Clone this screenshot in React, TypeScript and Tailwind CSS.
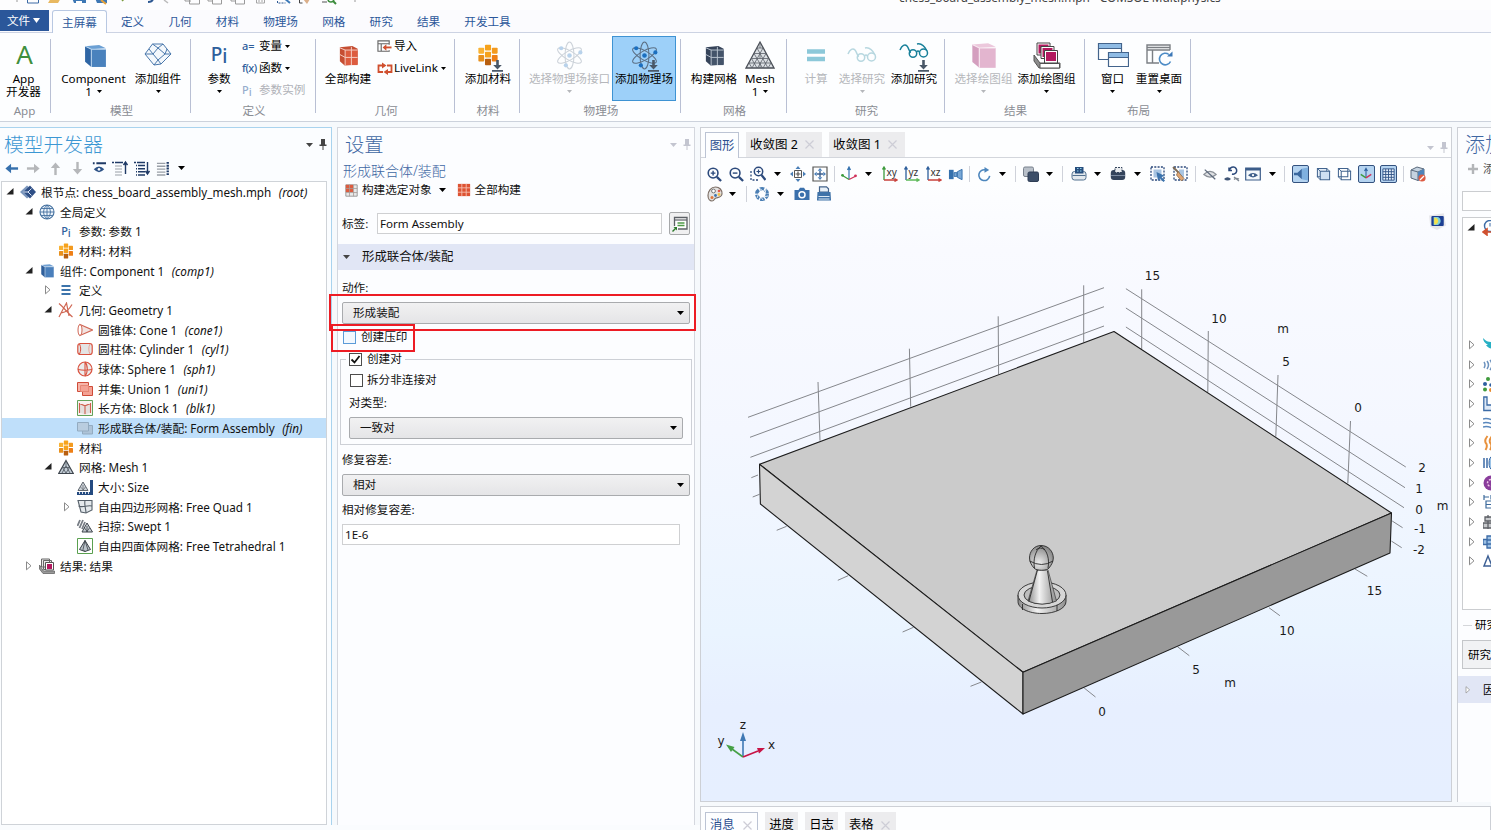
import React from "react";

type P = { children?: React.ReactNode; s?: number; c?: string; v?: string };

const S = ({ children, s = 16, c = "", v = "0 0 16 16" }: P) => (
  <svg width={s} height={s} viewBox={v} fill="none" className={`shrink-0 ${c}`}>
    {children}
  </svg>
);

const Caret = ({ c = "text-black" }: { c?: string }) => (
  <svg width="7" height="4" viewBox="0 0 7 4" className={`shrink-0 ${c}`}>
    <path d="M0 0h7L3.5 4z" fill="currentColor" />
  </svg>
);

const SmallCaret = ({ c = "text-black" }: { c?: string }) => (
  <svg width="5" height="3" viewBox="0 0 5 3" className={`shrink-0 ${c}`}>
    <path d="M0 0h5L2.5 3z" fill="currentColor" />
  </svg>
);

const Cell = ({ w, children }: { w: string; children?: React.ReactNode }) => (
  <div className={`flex h-full shrink-0 items-center justify-center ${w}`}>{children}</div>
);

const Sep = () => <div className="h-[16px] w-px bg-[#cfd2da]" />;

/* ---------- Icons ---------- */

const Cube = ({ s = 24, a, b, t, line }: { s?: number; a: string; b: string; t: string; line: string }) => (
  <S s={s} v="0 0 24 24">
    <path d="M2 3L15.500 2 22 5 8 6z" fill={t} />
    <path d="M2 3L8 6V23L2 18z" fill={b} />
    <path d="M8 6H22V23H8z" fill={a} />
    <path d="M2 3L8 6H22M8 6V23" stroke={line} strokeWidth="1" />
  </S>
);

const GridCube = ({ s = 24, a, b, line }: { s?: number; a: string; b: string; line: string }) => (
  <S s={s} v="0 0 24 24">
    <path d="M3 3.500L16 2 21.500 5 21.500 21.500 8 22.500 3 18z" fill={b} />
    <path d="M8.500 6H21.500V22H8.500z" fill={a} />
    <path d="M3 4L8.500 6.300H21.500M8.500 6V22.500M15 3V22M3 11L8.500 14H21.500" stroke={line} strokeWidth="1" />
  </S>
);

const Materials = ({ s = 16 }: { s?: number }) => (
  <S s={s}>
    <rect x="5.800" y="0.500" width="4.400" height="4.300" rx=".6" fill="#f6a21c" />
    <rect x="1" y="2.700" width="4.200" height="4.300" rx=".6" fill="#f9b233" />
    <rect x="10.800" y="2.700" width="4.200" height="4.300" rx=".6" fill="#f39a1e" />
    <rect x="5.800" y="5.600" width="4.400" height="4.300" rx=".6" fill="#f6a21c" />
    <rect x="1" y="8" width="4.200" height="4.800" rx=".6" fill="#e8901c" />
    <rect x="10.800" y="8" width="4.200" height="4.800" rx=".6" fill="#ee7f16" />
    <rect x="5.800" y="10.700" width="4.400" height="4.800" rx=".6" fill="#b85f10" />
  </S>
);

const DownArrow = () => (
  <svg width="11" height="12" viewBox="0 0 11 12" fill="#4a5868">
    <path d="M4.200 0h2.600v5h3L5.500 9.500 1.200 5h3zM0 10h11v1.800H0z" />
  </svg>
);

const Atom = ({ dim = false }: { dim?: boolean }) => (
  <S s={29} v="0 0 28 28" c={dim ? "opacity-30" : ""}>
    <g stroke="#5c6f84" strokeWidth="1">
      <ellipse cx="14" cy="14" rx="4.300" ry="13" />
      <ellipse cx="14" cy="14" rx="4.300" ry="13" transform="rotate(60 14 14)" />
      <ellipse cx="14" cy="14" rx="4.300" ry="13" transform="rotate(-60 14 14)" />
    </g>
    <circle cx="14" cy="14" r="2.200" fill="#1b6fc0" />
    <circle cx="6" cy="7" r="2" fill="#1b6fc0" />
    <circle cx="24.500" cy="11" r="2" fill="#1b6fc0" />
    <circle cx="10.500" cy="23.500" r="2" fill="#1b6fc0" />
  </S>
);

const MeshTri = () => (
  <S s={30} v="0 0 30 30">
    <path d="M15 2L29 28H1z" fill="#dde1e5" stroke="#4a4f57" strokeWidth="1.300" />
    <path d="M12 8h6M9 13.500h12M6.500 18.500h17M4 23h22M12 8l11 20M18 8L7 28M9 13.500L17.500 28M21 13.500L12.500 28M6.500 18.500L12 28M23.500 18.500L18 28M4 23l3 5M26 23l-3 5M15 2v6M15 13.500v5M15 23v5" stroke="#5a6068" strokeWidth=".8" />
  </S>
);

const Glasses = ({ dim = false }: { dim?: boolean }) => (
  <svg width="30" height="18" viewBox="0 0 30 18" fill="none" stroke="#19809a" strokeWidth="1.500" className={dim ? "opacity-30" : ""}>
    <path d="M1 8C3 3 6 2 8 4s2 6 4 6.500" />
    <circle cx="14" cy="11.500" r="3.700" />
    <circle cx="24.500" cy="11" r="4" />
    <path d="M17.500 10q1.500-2 3 0M18 2c4-1 7 1 10 7" />
  </svg>
);

const PlotGroup = ({ s = 28 }: { s?: number }) => (
  <S s={s} v="0 0 28 28">
    <path d="M1 14l6 8h20v5H6L1 20z" fill="#8c8c8c" stroke="#555" />
    <path d="M7 22.500h19.500V27H7z" fill="#fff" stroke="#555" />
    <path d="M4 2h13v12H4z" fill="#fff" stroke="#444" />
    <path d="M5.500 3.500h10v9h-10z" fill="#b3195f" />
    <path d="M8 5.500h13v12H8z" fill="#fff" stroke="#444" />
    <path d="M9.500 7h10v9h-10z" fill="#b3195f" />
    <path d="M11.500 9.500h13v12.500h-13z" fill="#fff" stroke="#444" />
    <path d="M13 11h10v9H13z" fill="#b3195f" />
  </S>
);

const WindowsIcon = () => (
  <S s={32} v="0 0 32 32">
    <path d="M1.500 4.500h23v16h-23z" fill="#fff" stroke="#44648c" strokeWidth="1.200" />
    <path d="M2 5h22v4H2z" fill="#8fbbe4" />
    <path d="M11.500 13.500h20v14h-20z" fill="#fff" stroke="#44648c" strokeWidth="1.200" />
    <path d="M12 14h19v4H12z" fill="#8fbbe4" />
    <path d="M2 9.500h22M12 18.500h19" stroke="#44648c" />
  </S>
);

const ResetDesk = () => (
  <S s={28} v="0 0 28 28">
    <path d="M14 22H2V4h23v5M2 9h23M7.500 9v13M2 6.500h23" stroke="#7b7f84" strokeWidth="1.400" />
    <path d="M25.500 20.500a5.800 5.800 0 1 1-1.600-7" stroke="#4d8cc6" strokeWidth="1.600" />
    <path d="M27.500 10.500v5h-5.500z" fill="#3c78b8" />
  </S>
);

const Globe = () => (
  <S>
    <circle cx="8" cy="8" r="7" stroke="#44709f" strokeWidth="1.100" fill="#eef5fc" />
    <path d="M8 1v14M1 8h14M2.200 4.500h11.600M2.200 11.500h11.600M8 1C3.500 4.500 3.500 11.500 8 15M8 1c4.500 3.500 4.500 10.500 0 14" stroke="#44709f" strokeWidth=".9" />
  </S>
);

const Pi = ({ s = 12 }: { s?: number }) => (
  <span className="flex items-start leading-none font-medium text-[#2f5f9c]" style={{ fontSize: s }}>
    P<span className="mt-[2px]">i</span>
  </span>
);

const TreeIcons: Record<string, React.ReactNode> = {
  root: (
    <S>
      <path d="M0 8L7 1.500l3 2.500v8L7 14.500z" fill="#7c97bd" />
      <path d="M3.500 8L10 1.500 16 8 10 14.500z" fill="#2f4f86" />
      <path d="M3.500 8h4.500l3.500-3.500M8 8l3.500 3.500" stroke="#dce6f4" strokeWidth="1" />
    </S>
  ),
  globe: <Globe />,
  pi: <Pi s={11} />,
  mat: <Materials />,
  comp: <Cube s={15} a="#4a7fbb" b="#2f5f9b" t="#6f9fd2" line="#cfe0f2" />,
  defs: (
    <S>
      <path d="M3.500 4h9M3.500 8h9M3.500 12h9" stroke="#3c74ab" strokeWidth="2" />
    </S>
  ),
  geom: (
    <S>
      <path d="M1 1.500c5 4 8 9 13.500 13.500M1 15C3 11 5 7 8.500 1l2.500 13M3 10.500c3 .5 7-1 11-8" stroke="#cf6652" strokeWidth="1.200" />
    </S>
  ),
  cone: (
    <S>
      <path d="M3 2.500L15.500 8 3 13.500z" fill="#f3e3e0" stroke="#d06553" strokeWidth="1.100" />
      <ellipse cx="3" cy="8" rx="2" ry="5.500" fill="#fff" stroke="#d06553" />
    </S>
  ),
  cyl: (
    <S>
      <rect x=".8" y="2.500" width="14.400" height="11" rx="2.500" fill="#e4e4e4" stroke="#d9523f" strokeWidth="1.200" />
      <path d="M2.500 3c1.600 3 1.600 7 0 10" stroke="#d9523f" />
      <path d="M13 3c-1.600 3-1.600 7 0 10" stroke="#e8a79c" />
    </S>
  ),
  sph: (
    <S>
      <circle cx="8" cy="8" r="7" fill="#ececec" stroke="#d9523f" strokeWidth="1.200" />
      <path d="M8 1v14M1 8.500q7 1.500 14 0M8 1c3 3 3 11 0 14" stroke="#d9523f" strokeWidth="1.100" />
    </S>
  ),
  uni: (
    <S>
      <path d="M5.500 5.500h10v9h-10z" fill="#f4a294" stroke="#cf4b38" />
      <path d="M.5 1.500h11v9H.5z" fill="#f7b5a9" stroke="#cf4b38" />
      <path d="M3.500 4.500h8v6h-8z" fill="#f4a294" stroke="#e58877" />
    </S>
  ),
  blk: (
    <S>
      <path d="M.5.5h15v15H.5z" fill="#f7f1ef" stroke="#62a35a" />
      <path d="M2.500 3.500l5.500 2.300 5.500-2.300v9l-5.500 2-5.500-2z" fill="#e4e0de" />
      <path d="M2.500 3.500l5.500 2.300 5.500-2.300M8 5.800V14M2.500 3v10M13.500 3v10" stroke="#cd5d4b" strokeWidth="1.100" />
    </S>
  ),
  fin: (
    <S>
      <path d="M5.500 5.500h10v8.500h-10z" fill="#aec4d8" stroke="#93abc0" />
      <path d="M.5 2.500h11V11H.5z" fill="#b9cddf" stroke="#93abc0" />
    </S>
  ),
  mesh: (
    <S>
      <path d="M8 1.500L15.300 14.500H.7z" fill="#c3cdd6" stroke="#3f464e" strokeWidth="1.200" />
      <path d="M8 2v5M4.500 8.500h7M8 7l-4 7M8 7l4 7M4.500 8.500L8 14l3.500-5.500" stroke="#4b535c" strokeWidth=".8" />
    </S>
  ),
  size: (
    <S>
      <path d="M6 3l5 8.500H1z" fill="#ccd2d7" stroke="#5f666e" />
      <path d="M6 6v5M3.500 8l3 3M8.500 8L6 11" stroke="#5f666e" strokeWidth=".7" />
      <path d="M13 1h3v15h-3zM0 13h16v3H0z" fill="#244a80" />
      <path d="M2.500 13v2M5.500 13v2M8.500 13v2M11.500 13v2" stroke="#fff" strokeWidth=".8" />
    </S>
  ),
  quad: (
    <S>
      <path d="M1 1.500h14v9.500L9 14 4 13z" fill="#e3e8ec" stroke="#56606a" strokeWidth="1.100" />
      <path d="M8 1.500c-1 5 1 8 1 12.500M1.500 7c4 2 8-1 13.500 0" stroke="#56606a" strokeWidth="1.100" />
    </S>
  ),
  swept: (
    <S>
      <path d="M3 2L.5 8M6 2L2.500 10M8 4l-3 7" stroke="#777d85" strokeWidth="1.800" />
      <path d="M10 5l5.500 9H5z" fill="#c7cdd3" stroke="#3f454d" />
      <path d="M10 8v6M7.500 10l3 4M12.500 10l-3 4" stroke="#3f454d" strokeWidth=".8" />
    </S>
  ),
  tet: (
    <S>
      <path d="M.5.5h15v15H.5z" fill="#fff" stroke="#5aa04f" />
      <path d="M8 2.500l5.500 9L8 13.500l-5.500-2z" fill="#bcc4cb" stroke="#3b4149" />
      <path d="M8 2.500l-2 9 2 2M8 2.500l3 9.500" stroke="#3b4149" strokeWidth=".8" />
    </S>
  ),
  res: (
    <S>
      <path d="M.5 7l4 6h11v2.500H4L.5 11z" fill="#9a9a9a" stroke="#666" strokeWidth=".8" />
      <path d="M2.500 1h8v8h-8zM4.500 2.500h8v9h-8z" fill="#e9e9e9" stroke="#666" />
      <path d="M6.500 4.500h8V12h-8z" fill="#fff" stroke="#555" />
      <path d="M8 6h5v5H8z" fill="#b3195f" />
    </S>
  ),
};

/* ---------- Ribbon ---------- */

const QuickAccess = () => (
  <div className="flex h-[10px] shrink-0 items-start overflow-hidden bg-[#fdfdfe]">
    <svg width="360" height="6" viewBox="0 0 360 6" fill="none" className="shrink-0">
      <path d="M17 0v2" stroke="#999" />
      <path d="M27.500-4v7h11v-7" stroke="#3c6ba6" />
      <path d="M48 3l3-5h10l-3 5z" fill="#e8b860" />
      <path d="M72 -2h14v5h-12z" fill="#3d77b4" /><path d="M76 1h6v2h-6z" fill="#fff" />
      <path d="M95 -2h12v5H97z" fill="#3d77b4" /><path d="M101 0l5 4" stroke="#e4a23c" strokeWidth="2" />
      <path d="M122 1l2-2" stroke="#7a9a3c" strokeWidth="1.500" />
      <path d="M148 2q5 0 5-4" stroke="#2d5892" strokeWidth="2" />
      <path d="M164 0l4 3" stroke="#bbb" strokeWidth="1.500" />
      <path d="M185-3v4h6M189.500-1h10v5h-10zM208-3v4h5M212.500-1h9v5h-9zM231-3v4h5M235.500-1h9v5h-9z" stroke="#9a9a9a" />
      <path d="M256.500-2v5h8v-5M259 0v2M262 0v2" stroke="#a5a5a5" />
      <path d="M277.500-2v5h8" stroke="#2d5892" strokeDasharray="2 1" /><path d="M284-2l6 5" stroke="#3c7ab8" strokeWidth="2" />
      <path d="M299.500-2v5h3" stroke="#444" /><path d="M303 -1h7l-3 5z" fill="#dcb08a" />
      <path d="M322 2h5" stroke="#555" /><circle cx="331" cy="-1" r="3" stroke="#3c8c3c" strokeWidth="1.500" /><path d="M333 1l3 3" stroke="#3c8c3c" strokeWidth="2" />
      <path d="M355 0v2" stroke="#999" />
    </svg>
    <div className="mt-[-11px] ml-[539px] text-[11.800px] leading-[16px] whitespace-pre text-[#444]">
      chess_board_assembly_mesh.mph - COMSOL Multiphysics
    </div>
  </div>
);

const Tabs = () => (
  <div className="flex h-[23px] shrink-0 border-b border-[#ccd3e3] bg-[#fbfbfe] text-[#2b579a]">
    <div className="flex h-[21px] w-[49px] items-center justify-center gap-[3px] bg-[#2b579a] pr-[2px] text-white">
      文件
      <svg width="7" height="5" viewBox="0 0 7 5"><path d="M0 0h7L3.500 5z" fill="#fff" /></svg>
    </div>
    <div className="ml-[3px] flex h-[23px] w-[55px] items-center justify-center rounded-t-[3px] border border-b-0 border-[#b8c8e2] bg-[#fdfeff] pt-[2px]">
      主屏幕
    </div>
    <div className="ml-[14px] flex items-center gap-[24.200px] pt-[2px]">
      {["定义", "几何", "材料", "物理场", "网格", "研究", "结果", "开发工具"].map((t) => (
        <span key={t}>{t}</span>
      ))}
    </div>
  </div>
);

const Group = ({ w, label, children }: { w: string; label: string; children: React.ReactNode }) => (
  <div className={`flex h-[74px] shrink-0 flex-col border-r border-[#b9c0d4] ${w}`}>
    <div className="flex h-[64px] shrink-0 items-start whitespace-nowrap">{children}</div>
    <div className="h-[14px] shrink-0 pl-[2px] text-center leading-[15px] text-[#8a8d94]">{label}</div>
  </div>
);

type BigProps = {
  w: string;
  icon: React.ReactNode;
  label: string;
  second?: string;
  caret?: boolean;
  dim?: boolean;
  on?: boolean;
  add?: boolean;
};
const Big = ({ w, icon, label, second, caret, dim, on, add }: BigProps) => (
  <div
    className={`mt-[-3px] flex h-[65px] shrink-0 flex-col items-center ${w} ${
      on ? "border border-[#3e93d3] bg-[#9dd0f9]" : "border border-transparent"
    } ${dim ? "text-[#b5b7bb]" : "text-black"}`}
  >
    <div className="relative flex h-[36px] w-full shrink-0 items-center justify-center">
      {icon}
      {add && (
        <div className="absolute top-[23px] left-1/2 ml-[4px]">
          <DownArrow />
        </div>
      )}
    </div>
    <div className="flex h-[12px] items-center justify-center leading-[12px]">{label}</div>
    <div className="flex h-[13px] items-center justify-center gap-[5px] leading-[13px]">
      {second}
      {caret && <SmallCaret c={dim ? "text-[#b5b7bb]" : "text-black"} />}
    </div>
  </div>
);

const Small = ({ icon, label, caret, dim, iw }: { icon: React.ReactNode; label: string; caret?: boolean; dim?: boolean; iw: string }) => (
  <div className={`flex h-[22px] items-center ${dim ? "text-[#b0b2b8]" : "text-black"}`}>
    <div className={`flex items-center ${iw}`}>{icon}</div>
    <span>{label}</span>
    {caret && (
      <span className="ml-[3px]">
        <SmallCaret />
      </span>
    )}
  </div>
);

const Ribbon = () => (
  <div className="flex h-[89px] shrink-0 border-b border-[#ccd2dc] bg-[#fdfeff] pt-[6px]">
    <Group w="w-[51px] pr-[3px]" label="App">
      <Big
        w="w-[47px]"
        icon={<span className="mt-[-2px] ml-[2px] text-[26px] leading-none text-[#3f8f3c]">A</span>}
        label="App"
        second="开发器"
      />
    </Group>
    <Group w="w-[140px]" label="模型">
      <Big w="ml-[7px] w-[71px]" icon={<div className="ml-[3px]"><Cube s={25} a="#4a82bd" b="#2f66a5" t="#6ba0d4" line="#b8d4ee" /></div>} label="Component" second="1" caret />
      <Big
        w="ml-[2px] w-[54px]"
        icon={
          <S s={28} v="0 0 28 28">
            <path d="M8.500 3L19 3 27 13 17 23 10 24 1 13z" fill="#f4f8fc" stroke="#4a78ac" strokeWidth="1" />
            <path d="M8.500 3L14 7l5-4M1 13L9 13 14 7l7 6h6M9 13l5 6 7-6M14 19L10 24M14 19l3 4M5 8l4 5M23 8l-2 5" stroke="#4a78ac" strokeWidth="1" />
          </S>
        }
        label="添加组件"
        caret
      />
    </Group>
    <Group w="w-[125px]" label="定义">
      <Big w="ml-[13px] w-[30px]" icon={<Pi s={19} />} label="参数" caret />
      <div className="mt-[-4px] ml-[8px] flex flex-col">
        <Small iw="w-[17px] text-[11px] font-medium text-[#2f5f9c]" icon="a=" label="变量" caret />
        <Small iw="w-[17px] text-[11px] tracking-[-0.5px] font-medium text-[#2f5f9c]" icon="f(x)" label="函数" caret />
        <Small iw="w-[17px] opacity-50" icon={<Pi s={11} />} label="参数实例" dim />
      </div>
    </Group>
    <Group w="w-[139px]" label="几何">
      <Big w="ml-[8px] w-[48px]" icon={<GridCube s={23} a="#dd5c3f" b="#c54e33" line="#f6cfc4" />} label="全部构建" />
      <div className="mt-[-4px] ml-[5px] flex flex-col">
        <Small
          iw="w-[17px]"
          icon={
            <S s={15}>
              <path d="M13 6V2H1v11h12v-1M1 5h12M4.500 5v8" stroke="#666" strokeWidth="1.200" />
              <path d="M15.500 9H8" stroke="#d0502f" strokeWidth="2" />
              <path d="M6 9l4-3.500v7z" fill="#d0502f" />
            </S>
          }
          label="导入"
        />
        <Small
          iw="w-[17px]"
          icon={
            <S s={16}>
              <path d="M6 12H1.500V5.500H6M10 12h4.500V5.500H10" stroke="#d0502f" strokeWidth="1.800" />
              <path d="M5 2.500l4.500 3-4.500 3zM11 9l-4.500 3 4.500 3z" fill="#d0502f" />
            </S>
          }
          label="LiveLink"
          caret
        />
      </div>
    </Group>
    <Group w="w-[65px]" label="材料">
      <Big w="ml-[9px] w-[48px]" icon={<Materials s={22} />} label="添加材料" add />
    </Group>
    <Group w="w-[161px]" label="物理场">
      <Big w="ml-[8px] w-[83px]" icon={<Atom dim />} label="选择物理场接口" caret dim />
      <Big w="ml-[1px] w-[64px]" icon={<Atom />} label="添加物理场" on add />
    </Group>
    <Group w="w-[106px]" label="网格">
      <Big w="ml-[9px] w-[48px]" icon={<GridCube s={23} a="#44546a" b="#36445a" line="#b9c3cf" />} label="构建网格" />
      <Big w="ml-[4px] w-[36px]" icon={<MeshTri />} label="Mesh" second="1" caret />
    </Group>
    <Group w="w-[158px]" label="研究">
      <Big
        w="ml-[16px] w-[26px]"
        icon={
          <S s={18} v="0 0 18 18">
            <path d="M0 5.500h18M0 13h18" stroke="#8cc8d9" strokeWidth="4.500" />
          </S>
        }
        label="计算"
        dim
      />
      <Big w="ml-[9px] w-[48px]" icon={<Glasses dim />} label="选择研究" caret dim />
      <Big w="ml-[4px] w-[48px]" icon={<div className="mb-[8px]"><Glasses /></div>} label="添加研究" add />
    </Group>
    <Group w="w-[140px]" label="结果">
      <Big w="ml-[9px] w-[59px]" icon={<Cube s={28} a="#e3b5cf" b="#d49fbf" t="#ecc8dc" line="#f7e6ef" />} label="选择绘图组" caret dim />
      <Big w="ml-[4px] w-[59px]" icon={<PlotGroup />} label="添加绘图组" caret />
    </Group>
    <Group w="w-[106px]" label="布局">
      <Big w="ml-[12px] w-[31px]" icon={<WindowsIcon />} label="窗口" caret />
      <Big w="ml-[7px] w-[48px]" icon={<ResetDesk />} label="重置桌面" caret />
    </Group>
  </div>
);

/* ---------- Model builder ---------- */

const Pin = ({ c }: { c: string }) => (
  <svg width="8" height="11" viewBox="0 0 8 11" className={`shrink-0 ${c}`} fill="currentColor">
    <path d="M2 0h4v5.500h1.500V7H4.500v4h-1V7H.5V5.500H2z" />
  </svg>
);

type Node = [indent: string, open: "o" | "c" | "", icon: string, text: string, tag?: string];
const nodes: Node[] = [
  ["pl-[4px]", "o", "root", "根节点: chess_board_assembly_mesh.mph", "root"],
  ["pl-[23px]", "o", "globe", "全局定义"],
  ["pl-[42px]", "", "pi", "参数: 参数 1"],
  ["pl-[42px]", "", "mat", "材料: 材料"],
  ["pl-[23px]", "o", "comp", "组件: Component 1", "comp1"],
  ["pl-[42px]", "c", "defs", "定义"],
  ["pl-[42px]", "o", "geom", "几何: Geometry 1"],
  ["pl-[61px]", "", "cone", "圆锥体: Cone 1", "cone1"],
  ["pl-[61px]", "", "cyl", "圆柱体: Cylinder 1", "cyl1"],
  ["pl-[61px]", "", "sph", "球体: Sphere 1", "sph1"],
  ["pl-[61px]", "", "uni", "并集: Union 1", "uni1"],
  ["pl-[61px]", "", "blk", "长方体: Block 1", "blk1"],
  ["pl-[61px]", "", "fin", "形成联合体/装配: Form Assembly", "fin"],
  ["pl-[42px]", "", "mat", "材料"],
  ["pl-[42px]", "o", "mesh", "网格: Mesh 1"],
  ["pl-[61px]", "", "size", "大小: Size"],
  ["pl-[61px]", "c", "quad", "自由四边形网格: Free Quad 1"],
  ["pl-[61px]", "", "swept", "扫掠: Swept 1"],
  ["pl-[61px]", "", "tet", "自由四面体网格: Free Tetrahedral 1"],
  ["pl-[23px]", "c", "res", "结果: 结果"],
];

const Twist = ({ open }: { open: string }) => (
  <svg width="8" height="10" viewBox="0 0 8 10" className="shrink-0">
    {open === "o" && <path d="M7.500 1v6.500H.500z" fill="#222" />}
    {open === "c" && <path d="M1.500.8v8L6 4.800z" fill="#fff" stroke="#8a8a8a" />}
  </svg>
);

const ModelBuilder = () => (
  <div className="flex w-[332px] shrink-0 flex-col border-t border-r border-[#a9d3ee] bg-[#fbfdff]">
    <div className="flex h-[33px] shrink-0 items-center pr-[4px] pl-[4px]">
      <span className="flex-1 text-[19.800px] leading-none font-light text-[#3c97d3]">模型开发器</span>
      <Caret c="text-[#444]" />
      <span className="ml-[6px]"><Pin c="text-[#444]" /></span>
    </div>
    <div className="flex h-[14px] shrink-0 items-center">
      <Cell w="w-[22px]"><S s={15}><path d="M15 8H4" stroke="#3670ad" strokeWidth="2.600" /><path d="M7.500 3L1.500 8l6 5z" fill="#3670ad" /></S></Cell>
      <Cell w="w-[22px]"><S s={15}><path d="M1 8h11" stroke="#b5b7ba" strokeWidth="2.600" /><path d="M8.500 3l6 5-6 5z" fill="#b5b7ba" /></S></Cell>
      <Cell w="w-[22px]"><S s={15}><path d="M8 15V4" stroke="#b5b7ba" strokeWidth="2.600" /><path d="M3 7.500l5-6 5 6z" fill="#b5b7ba" /></S></Cell>
      <Cell w="w-[22px]"><S s={15}><path d="M8 1v11" stroke="#b5b7ba" strokeWidth="2.600" /><path d="M3 8.500l5 6 5-6z" fill="#b5b7ba" /></S></Cell>
      <Cell w="w-[21px]"><S s={14}><path d="M1 2.500h2M5 2.500h11" stroke="#1f3a66" strokeWidth="2.400" /><path d="M2 9.500q6-6.500 12 0-6 6.500-12 0z" fill="#2f5488" /><circle cx="8" cy="9.500" r="1.500" fill="#fff" /></S></Cell>
      <Cell w="w-[22px]"><S s={16}><path d="M3 6h7M3 9h7M3 12h7M3 15h7" stroke="#9aa0a8" strokeWidth="1.200" /><path d="M0 2.500h2M3 2.500h8" stroke="#1f3a66" strokeWidth="1.600" /><path d="M13.500 14V3M11.500 5l2-3 2 3" stroke="#1f3a66" strokeWidth="1.400" /></S></Cell>
      <Cell w="w-[22px]"><S s={16}><path d="M0 2.500h2M3 2.500h8M2 5.600h1M4 5.600h7M2 8.700h1M4 8.700h7M2 11.800h1M4 11.800h7M2 14.900h1M4 14.900h7" stroke="#1f3a66" strokeWidth="1.500" /><path d="M13.500 2v11M11.500 11l2 3 2-3" stroke="#1f3a66" strokeWidth="1.400" /></S></Cell>
      <Cell w="w-[21px]"><S s={15}><path d="M1 2.500h9M1 5.600h9M1 8.700h9M1 11.800h9M1 14.900h9" stroke="#9aa0a8" strokeWidth="1.400" /><path d="M12.500 1v15" stroke="#1f3a66" strokeWidth="2.500" strokeDasharray="2 1" /></S></Cell>
      <Cell w="w-[15px]"><Caret /></Cell>
    </div>
    <div className="mt-[6px] ml-[1px] flex w-[326px] flex-1 flex-col border border-[#cfd3d8] bg-white text-[11.700px]">
      {nodes.map(([pad, open, icon, text, tag], i) => (
        <div
          key={i}
          className={`flex h-[19.680px] shrink-0 items-center whitespace-pre text-[#111] ${pad} ${icon === "fin" ? "bg-[#bfdffa]" : ""}`}
        >
          <Twist open={open} />
          <span className="ml-[6px] flex w-[16px] items-center justify-center">{TreeIcons[icon]}</span>
          <span className="ml-[5px]">{text}</span>
          {tag && <span className="ml-[7.500px] italic">({tag})</span>}
        </div>
      ))}
    </div>
  </div>
);

/* ---------- Settings ---------- */

const Combo = ({ w, children }: { w: string; children: React.ReactNode }) => (
  <div className={`flex h-[22px] shrink-0 items-center justify-between rounded-[2px] border border-[#a9abae] bg-linear-to-b from-[#f1f1f2] to-[#e5e5e7] pr-[5px] pl-[10px] ${w}`}>
    {children}
    <Caret />
  </div>
);

const Check = ({ on, blue }: { on?: boolean; blue?: boolean }) => (
  <div className={`flex h-[13px] w-[13px] shrink-0 items-center justify-center border ${blue ? "border-[#5b9bd8] bg-[#f2f8fe]" : "border-[#4c4c4c] bg-white"}`}>
    {on && (
      <S s={11} v="0 0 11 11">
        <path d="M1.500 5.500l3 3L9.500 2" stroke="#111" strokeWidth="1.800" />
      </S>
    )}
  </div>
);

const Settings = () => (
  <div className="relative ml-[5px] flex w-[358px] shrink-0 flex-col border border-b-0 border-[#d4d7de] bg-[#fcfdff] text-[#111]">
    <div className="flex h-[33px] shrink-0 items-center pr-[3px] pl-[7px]">
      <span className="flex-1 text-[19.300px] leading-none font-light text-[#3f67a3]">设置</span>
      <Caret c="text-[#c3c5d0]" />
      <span className="ml-[6px]"><Pin c="text-[#c3c5d0]" /></span>
    </div>
    <div className="flex h-[19px] shrink-0 items-center pl-[5px] text-[14px] font-light text-[#3f67a3]">形成联合体/装配</div>
    <div className="flex h-[20px] shrink-0 items-center pl-[7px]">
      <S s={13}>
        <path d="M1 1h14v14H1z" fill="#e9e9e9" stroke="#8a8a8a" />
        <path d="M1 1h9v9H1z" fill="#dd5c3f" />
        <path d="M1 5.500h14M1 10.500h14M5.500 1v14M10.500 1v14" stroke="#a89a96" />
      </S>
      <span className="ml-[4px]">构建选定对象</span>
      <span className="ml-[7px]"><Caret /></span>
      <span className="ml-[11px]">
        <S s={14}>
          <path d="M1 1h14v14H1z" fill="#dd5333" />
          <path d="M1 5.500h14M1 10.500h14M5.500 1v14M10.500 1v14" stroke="#f7c0b2" />
        </S>
      </span>
      <span className="ml-[4px]">全部构建</span>
    </div>
    <div className="mt-[12px] flex h-[23px] shrink-0 items-center pl-[4px]">
      <span className="w-[35px]">标签:</span>
      <div className="flex h-[21px] w-[285px] items-center border border-[#cfd0d2] bg-white pl-[2px]">Form Assembly</div>
      <div className="ml-[7px] flex h-[23px] w-[21px] items-center justify-center rounded-[2px] border border-[#a6a8aa] bg-[#f0f0f1]">
        <S s={16}>
          <path d="M2.500 10V1.500h12.500v11.500H6" fill="#fff" stroke="#5c6066" strokeWidth="1.300" />
          <path d="M2.500 4h12.500" stroke="#5c6066" strokeWidth="1.200" />
          <path d="M5.500 7h7M5.500 9.500h7" stroke="#4f9a48" strokeWidth="1.300" />
          <path d="M.5 15.500l3.500-3.500" stroke="#2d7a2c" strokeWidth="1.400" />
          <path d="M5 11v3.500L1.500 11z" fill="#2d7a2c" />
        </S>
      </div>
    </div>
    <div className="mt-[9px] flex h-[26px] shrink-0 items-center bg-[#e1e6f5] pl-[5px]">
      <Caret c="text-[#444]" />
      <span className="ml-[12px] text-[12.400px]">形成联合体/装配</span>
    </div>
    <div className="mt-[9px] flex h-[18px] shrink-0 items-center pl-[4px]">动作:</div>
    <div className="mt-[5px] pl-[4px]"><Combo w="w-[348px]">形成装配</Combo></div>
    <div className="mt-[5px] flex h-[16px] shrink-0 items-center pl-[5px]">
      <Check blue />
      <span className="ml-[5px]">创建压印</span>
    </div>
    <fieldset className="mt-[5px] ml-[2px] flex h-[95px] w-[352px] shrink-0 flex-col border border-[#cdd0d6] pl-[8px]">
      <legend className="-ml-[3px] flex h-[18px] items-center px-[3px]">
        <Check on />
        <span className="ml-[5px]">创建对</span>
      </legend>
      <div className="mt-[4px] flex h-[16px] items-center pl-[1px]">
        <Check />
        <span className="ml-[4px]">拆分非连接对</span>
      </div>
      <div className="mt-[6px] flex h-[18px] items-center">对类型:</div>
      <div className="mt-[5px]"><Combo w="w-[334px]">一致对</Combo></div>
    </fieldset>
    <div className="mt-[6px] flex h-[18px] shrink-0 items-center pl-[4px]">修复容差:</div>
    <div className="mt-[5px] pl-[4px]"><Combo w="w-[348px]">相对</Combo></div>
    <div className="mt-[5px] flex h-[18px] shrink-0 items-center pl-[4px]">相对修复容差:</div>
    <div className="mt-[5px] ml-[4px] flex h-[21px] w-[338px] shrink-0 items-center border border-[#cfd0d2] bg-white pl-[2px]">1E-6</div>

    <div className="absolute top-[166px] left-[-9px] h-[37px] w-[367px] border-2 border-[#ed1c24]" />
    <div className="absolute top-[196px] left-[-7px] h-[28px] w-[84px] border-2 border-[#ed1c24]" />
  </div>
);

/* ---------- Graphics ---------- */

const Close = () => (
  <svg width="9" height="9" viewBox="0 0 9 9" stroke="#cdcdd6" strokeWidth="1.200">
    <path d="M.5.5l8 8M8.500.5l-8 8" />
  </svg>
);

const Mag = ({ d }: { d: string }) => (
  <S s={15}>
    <circle cx="6.500" cy="6.500" r="5.200" stroke="#2c4a7c" strokeWidth="1.700" />
    <path d="M10.500 10.500l4.500 4.500" stroke="#2c4a7c" strokeWidth="2.400" />
    <path d={d} stroke="#2c4a7c" strokeWidth="1.500" />
  </S>
);

const Plane = ({ t, h, v }: { t: string; h: string; v: string }) => (
  <svg width="16" height="16" viewBox="0 0 16 16" fill="none">
    <path d="M2 14V2M.5 3.500L2 1l1.500 2.500" stroke={v} strokeWidth="1.300" />
    <path d="M2 14h12M12.500 12.500L15 14l-2.500 1.500" stroke={h} strokeWidth="1.300" />
    <text x="4.500" y="9.500" fontSize="10" fill="#333">{t}</text>
  </svg>
);

const Axis3 = () => (
  <S>
    <path d="M8 13V2M6.500 4L8 1l1.500 3" stroke="#3673b0" strokeWidth="1.200" />
    <path d="M8 13.500L1.500 9.500" stroke="#3c9a3c" strokeWidth="1.300" />
    <path d="M8 13.500L15 10" stroke="#d0325a" strokeWidth="1.300" />
    <circle cx="1.500" cy="9.300" r="1.400" fill="#3c9a3c" />
    <circle cx="14.500" cy="9.800" r="1.400" fill="#d0325a" />
  </S>
);

const On = ({ children }: { children: React.ReactNode }) => (
  <div className="flex h-[18px] w-[17px] items-center justify-center rounded-[2px] border-[1.500px] border-[#34527f] bg-[#b4d3f0]">{children}</div>
);

const WireCube = ({ solid }: { solid?: boolean }) => (
  <S s={15}>
    <path d="M1.500 1.500h10v9h-10z" fill={solid ? "#e3edf7" : "none"} stroke="#42648f" strokeWidth="1.100" />
    <path d="M4.500 4.500h10v9h-10z" fill={solid ? "#cfe0f2" : "none"} stroke="#42648f" strokeWidth="1.100" />
    <path d="M1.500 1.500l3 3M11.500 1.500l3 3M1.500 10.500l3 3" stroke="#42648f" />
  </S>
);

const Toolbar = () => (
  <div className="flex h-[47px] shrink-0 flex-col pt-[6px] pl-[3px]">
    <div className="flex h-[20px] shrink-0 items-center">
      <Cell w="w-[21px]"><Mag d="M4 6.500h5M6.500 4v5" /></Cell>
      <Cell w="w-[22px]"><Mag d="M4 6.500h5" /></Cell>
      <Cell w="w-[22px]">
        <S><path d="M1 5v9h7" stroke="#2c4a7c" strokeDasharray="2 1.500" strokeWidth="1.300" /><circle cx="8.500" cy="5.500" r="4.200" stroke="#2c4a7c" strokeWidth="1.500" /><path d="M11.500 9l4 5" stroke="#2c4a7c" strokeWidth="2.200" /><path d="M6.500 5.500h4M8.500 3.500v4" stroke="#2c4a7c" strokeWidth="1.200" /></S>
      </Cell>
      <Cell w="w-[17px]"><Caret /></Cell>
      <Cell w="w-[23px]">
        <S><path d="M4.500 4.500h7v7h-7z" stroke="#555" /><path d="M8 5.500v5M5.500 8h5" stroke="#555" strokeWidth="1.200" /><path d="M8 0l2.500 3h-5zM8 16l2.500-3h-5zM0 8l3-2.500v5zM16 8l-3-2.500v5z" fill="#4a7fb8" /></S>
      </Cell>
      <Cell w="w-[22px]">
        <S><path d="M1 1h14v14H1z" stroke="#555" strokeWidth="1.200" /><path d="M8 5v6M5 8h6" stroke="#3c5f8c" strokeWidth="1.400" /><path d="M8 2l2.300 2.700H5.700zM8 14l2.300-2.700H5.700zM2 8l2.700-2.300v4.600zM14 8l-2.700-2.300v4.600z" fill="#4a7fb8" /></S>
      </Cell>
      <Cell w="w-[7px]"><Sep /></Cell>
      <Cell w="w-[22px]"><Axis3 /></Cell>
      <Cell w="w-[17px]"><Caret /></Cell>
      <Cell w="w-[2px]" />
      <Cell w="w-[22px]"><Plane t="xy" h="#c8413c" v="#3c9a3c" /></Cell>
      <Cell w="w-[22px]"><Plane t="yz" h="#5db95a" v="#2e5f9c" /></Cell>
      <Cell w="w-[21px]"><Plane t="xz" h="#c8413c" v="#2e5f9c" /></Cell>
      <Cell w="w-[22px]">
        <S s={15}><path d="M1 3h5v10H1z" fill="#3470ad" /><path d="M6.500 6h3v4h-3zM10 5l5-2.500v11L10 11z" fill="#79a8d6" stroke="#3470ad" /></S>
      </Cell>
      <Cell w="w-[7px]"><Sep /></Cell>
      <Cell w="w-[22px]">
        <S s={15}><path d="M13.500 9.500A5.800 5.800 0 1 1 9 3" stroke="#4d86bd" strokeWidth="1.700" /><path d="M8 0l5 3.200L8 6z" fill="#4d86bd" /></S>
      </Cell>
      <Cell w="w-[15px]"><Caret /></Cell>
      <Cell w="w-[10px]"><Sep /></Cell>
      <Cell w="w-[22px]">
        <S><rect x=".5" y="1" width="10" height="9.500" rx="1.500" fill="#b9c0c9" stroke="#79828e" /><rect x="5" y="6" width="10.500" height="9.500" rx="1.500" fill="#3d4f69" stroke="#2e3d54" /></S>
      </Cell>
      <Cell w="w-[15px]"><Caret /></Cell>
      <Cell w="w-[11px]"><Sep /></Cell>
      <Cell w="w-[22px]">
        <S><rect x="1" y="5.500" width="14" height="8.500" rx="2.500" fill="#e3e9ee" stroke="#52718f" /><path d="M1.500 9.500h13" stroke="#52718f" /><path d="M4 1h8.500v6.500H4z" fill="#274e7e" /><path d="M6 2.500h1.500M9 2.500h1.500M6 5h1.500M9 5h1.500" stroke="#8fd0e8" /></S>
      </Cell>
      <Cell w="w-[15px]"><Caret /></Cell>
      <Cell w="w-[2px]" />
      <Cell w="w-[22px]">
        <S><rect x=".8" y="4" width="14.400" height="10" rx="3" fill="#34445c" /><path d="M5 1.500h7v5H5z" fill="#e9ecef" stroke="#34445c" strokeDasharray="2 1" /><path d="M1 9.500h14" stroke="#7b8aa0" /></S>
      </Cell>
      <Cell w="w-[16px]"><Caret /></Cell>
      <Cell w="w-[2px]" />
      <Cell w="w-[22px]">
        <S><path d="M1 1h13v13H1z" stroke="#2c4a7c" strokeWidth="1.300" strokeDasharray="2 1.300" /><path d="M3.500 3.500h8v8h-8z" fill="#a9c5e2" /><path d="M6.500 6l8.500 4-3.500 1 3.500 3.500-1.500 1.500-3.500-3.500-2 2.500z" fill="#3d74ad" /></S>
      </Cell>
      <Cell w="w-[22px]">
        <S><path d="M2 1h13v13H2z" stroke="#2c4a7c" strokeWidth="1.300" strokeDasharray="2 1.300" /><path d="M7 3.500h5v8H7z" fill="#a9c5e2" /><path d="M1 1l6 6" stroke="#7d6a55" strokeWidth="1.800" /><path d="M6 5.500l6 7-2.500 2.500L4.500 9z" fill="#e0a674" stroke="#8c6a49" strokeWidth=".8" /></S>
      </Cell>
      <Cell w="w-[8px]"><Sep /></Cell>
      <Cell w="w-[22px]">
        <S s={14}><path d="M1 8.500q7-7 14 0-7 6-14 0z" stroke="#8a8f97" strokeWidth="1.400" fill="#dfe1e4" /><path d="M2 3l12 11" stroke="#5d6a7d" strokeWidth="1.500" /></S>
      </Cell>
      <Cell w="w-[21px]">
        <S><path d="M5 1.500v3h3M5.500 4.500A3.600 3.600 0 1 1 8 8" stroke="#2c4a7c" strokeWidth="1.500" /><path d="M0 13q3.500-3.500 7 0-3.500 3-7 0z" fill="#3f5475" /><path d="M10 11l5 4M10 13.500q2-2 5-.5" stroke="#7f8791" strokeWidth="1.300" /></S>
      </Cell>
      <Cell w="w-[22px]">
        <S><path d="M.7 2h14.600v12H.7z" fill="#f3f8fc" stroke="#3c5d8a" strokeWidth="1.200" /><path d="M.7 2h14.600v2.500H.7z" fill="#3c5d8a" /><path d="M3 9.300q5-4.600 10 0-5 4.200-10 0z" fill="#3c5d8a" /><circle cx="8" cy="9.200" r="1.100" fill="#fff" /></S>
      </Cell>
      <Cell w="w-[16px]"><Caret /></Cell>
      <Cell w="w-[9px]"><Sep /></Cell>
      <Cell w="w-[23px]"><On><S s={14}><path d="M0 6.500h4l5-4.500v12L4 9.500H0z" fill="#3a679e" /><path d="M9 2l7-1.500v15L9 14z" fill="#7fb0df" /></S></On></Cell>
      <Cell w="w-[22px]"><WireCube solid /></Cell>
      <Cell w="w-[21px]"><WireCube /></Cell>
      <Cell w="w-[22px]"><On><S s={14}><path d="M8 12V2M6.300 4.500L8 1.500l1.700 3" stroke="#2c5f9c" strokeWidth="1.200" /><path d="M8 12.500L2 8.500" stroke="#3c9a3c" strokeWidth="1.600" /><path d="M8 12.500L14 8.500" stroke="#d0325a" strokeWidth="1.600" /></S></On></Cell>
      <Cell w="w-[22px]"><On><S s={15}><path d="M2 2h12v12H2zM5 2v12M8 2v12M11 2v12M2 5h12M2 8h12M2 11h12" fill="#e7f0fa" stroke="#33568a" strokeWidth="1" /></S></On></Cell>
      <Cell w="w-[8px]"><Sep /></Cell>
      <Cell w="w-[21px]">
        <S><path d="M1 4l6-3 7 2v8l-6 3.500L1 12z" fill="#c5d3e0" stroke="#5a6a7d" /><path d="M1 4l7 2 6-3M8 6v8.500" stroke="#5a6a7d" /><path d="M8 6l6-3v8l-6 3.500z" fill="#4e84bb" /><circle cx="12" cy="12" r="3.600" fill="#dd5b42" /><path d="M10 14l4-4" stroke="#fff" strokeWidth="1.200" /></S>
      </Cell>
    </div>
    <div className="flex h-[20px] shrink-0 items-center">
      <Cell w="w-[22px]">
        <S><path d="M8.500 1C4 1 1 5 1 9.500 1 13 3 15 5 15c2.500 0 2-2.500 4-3 2-.4 5.500-.5 6-4C15.300 4 12.500 1 8.500 1z" fill="#e4e2e0" stroke="#7c6f66" strokeWidth="1.200" /><circle cx="6.500" cy="5" r="1.900" fill="#fff" stroke="#777" /><circle cx="12" cy="5" r="1.300" fill="#e2574c" /><circle cx="12" cy="8.500" r="1.400" fill="#f3c14b" /><circle cx="8.500" cy="9.500" r="1.400" fill="#3c74ad" /><circle cx="5" cy="11.500" r="1.500" fill="#e0763c" /></S>
      </Cell>
      <Cell w="w-[13px]"><Caret /></Cell>
      <Cell w="w-[14px]"><Sep /></Cell>
      <Cell w="w-[18px]">
        <S><circle cx="8" cy="8" r="5.300" stroke="#4b7fb4" strokeWidth="3.400" strokeDasharray="4.300 1.250" /><path d="M5 2l4 3M12 3l-1 5M14 10l-5 1M9 14l-3-4M3 12l2-5" stroke="#fff" strokeWidth=".8" /></S>
      </Cell>
      <Cell w="w-[18px]"><Caret /></Cell>
      <Cell w="w-[25px]">
        <S><path d="M.5 4h4L6 1.800h4L11.500 4h4v10H.5z" fill="#3a70ac" /><circle cx="8" cy="8.800" r="3" fill="#3a70ac" stroke="#fff" strokeWidth="1.500" /></S>
      </Cell>
      <Cell w="w-[19px]">
        <S><path d="M3.500 6V.8h7l2 2V6z" fill="#e8f0f8" stroke="#44648c" strokeWidth="1.200" /><path d="M1.500 6h13l.5 8.500H1z" fill="#3f72a8" /><path d="M2.500 10.500h11M2.500 13h11" stroke="#dbe8f4" strokeWidth="1.100" /></S>
      </Cell>
    </div>
  </div>
);

const gridLines = [
  [748, 417.3, 1104, 287.7], [750, 437.3, 1104, 306.7], [750.4, 457.3, 1104, 326],
  [751.3, 477.7, 758, 475], [752.7, 497, 759.5, 494.3],
  [1083.7, 285.3, 1083.7, 342.3], [998.2, 316.3, 998.6, 374.3], [909.4, 348.7, 910.7, 406.7], [818, 382, 820, 440.7],
  [1125.9, 288.7, 1405.8, 467], [1125.9, 308, 1405, 487.7], [1125.9, 327, 1404, 507.7],
  [1141.7, 289.3, 1141.7, 349], [1208.3, 331, 1207.8, 392.3], [1278, 375, 1275.8, 436.7], [1350.5, 421, 1347.8, 483.3],
  [1392.2, 521, 1402.6, 527.7], [1391.3, 541, 1401.7, 547.7],
  [1355, 569, 1367.3, 576.3], [1269, 607.7, 1279.9, 615.7], [1177.5, 646.7, 1189.3, 655.7], [1084.2, 688, 1095.5, 697],
  [776.7, 530.3, 786.6, 526.3], [837.8, 580.3, 848.2, 575.7], [902.6, 632, 913.5, 627.3], [970.5, 686.3, 981.4, 682],
];
const axisLabels: [string, number, number][] = [
  ["15", 1152.5, 276], ["10", 1219, 318.5], ["m", 1283, 329], ["5", 1286, 362], ["0", 1358, 408],
  ["2", 1422, 468], ["1", 1419, 489], ["0", 1419, 509.5], ["-1", 1420, 529], ["-2", 1419, 550], ["m", 1442.5, 506],
  ["15", 1374.5, 591], ["10", 1287, 631], ["5", 1196, 670], ["m", 1230, 683], ["0", 1102, 711.5],
  ["z", 743, 725], ["y", 721, 741], ["x", 771.5, 745],
];

const Scene = () => (
  <svg width="750" height="595" viewBox="701 205 750 595" className="shrink-0" fill="none">
    <defs>
      <linearGradient id="cone" x1="0" x2="1">
        <stop offset="0" stopColor="#8a8a8a" />
        <stop offset=".4" stopColor="#f2f2f2" />
        <stop offset="1" stopColor="#8f8f8f" />
      </linearGradient>
      <radialGradient id="ball" cx=".4" cy=".7" r=".7">
        <stop offset="0" stopColor="#ededed" />
        <stop offset="1" stopColor="#858585" />
      </radialGradient>
    </defs>
    <g stroke="#85878c" strokeWidth="1">
      {gridLines.map(([a, b, c, d], i) => (
        <line key={i} x1={a} y1={b} x2={c} y2={d} />
      ))}
    </g>
    <g stroke="#1c1c1c" strokeWidth="1.100" strokeLinejoin="round">
      <path d="M1114 331.500L1391.500 513 1023 672.300 759.500 464.300z" fill="#cbcbcb" />
      <path d="M759.500 464.300L1023 672.300V714L760.400 504z" fill="#d3d3d3" />
      <path d="M1023 672.300L1391.500 513 1390 553 1023 714z" fill="#999999" />
    </g>
    <g stroke="#2a2a2a" strokeWidth=".9">
      <path d="M1018 595v6.500c0 7 11 12 24 12s24-5 24-12V595z" fill="url(#cone)" />
      <ellipse cx="1042" cy="595" rx="24" ry="13" fill="#d6d6d6" />
      <ellipse cx="1042" cy="595" rx="18" ry="9" fill="#bdbdbd" />
      <path d="M1037 570L1028 601q14 6 28.500 0L1048 570z" fill="url(#cone)" strokeWidth=".6" />
      <path d="M1037.500 570L1029 601M1047.500 571l5 31M1022.500 604v6M1057 605v6" strokeWidth=".9" />
      <path d="M1041 545.500c7.500 0 12.300 6 12.300 12.500 0 4-2 7-4.300 10-1.600 3-13 3-15 0-2.500-3-4.500-6-4.500-10 0-6.500 4.500-12.500 11.500-12.500z" fill="url(#ball)" />
      <path d="M1041 546c-6 5-8 14-6.500 22M1041 546c7 5 8.500 14 7 22M1029.700 561q12 7 23.300 0M1036 550q4-4 9 0" />
    </g>
    <g strokeWidth="1.600">
      <path d="M743 757v-18" stroke="#3f78b4" />
      <path d="M743 732l3 9h-6z" fill="#3f78b4" />
      <path d="M743 757l-11-8" stroke="#46a046" />
      <path d="M726 744.500l8.500 2.500-3.500 5z" fill="#46a046" />
      <path d="M743 757l15-6" stroke="#c81446" />
      <path d="M765 748l-6 5.500-2-5.500z" fill="#c81446" />
    </g>
    <g fill="#1a1a1a" fontSize="12" fontFamily="'DejaVu Sans'" textAnchor="middle">
      {axisLabels.map(([t, x, y], i) => (
        <text key={i} x={x} y={y + 4.300}>{t}</text>
      ))}
    </g>
  </svg>
);

const Graphics = () => (
  <div className="relative flex h-[675px] w-[752px] flex-col border border-[#cdd0d6] bg-[linear-gradient(to_bottom,#fdfeff_8%,#f9faff_18%,#f4f7ff_45%,#eaf4ff_75%,#e7efff_86%,#e6efff_100%)]">
    <div className="flex h-[30px] shrink-0 items-end border-b border-[#d3d6dc] bg-[#fdfeff] pl-[4px] text-[12.300px]">
      <div className="mb-[-1px] flex h-[26px] w-[34px] items-center justify-center border border-b-0 border-[#bcc4d4] bg-[#fdfeff] text-[#2b4f8f]">图形</div>
      <div className="ml-[7px] flex h-[25px] w-[76px] items-center gap-[7px] bg-[#ececee] pl-[4px] text-[12.500px]">收敛图 2 <Close /></div>
      <div className="ml-[7px] flex h-[25px] w-[76px] items-center gap-[7px] bg-[#ececee] pl-[4px] text-[12.500px]">收敛图 1 <Close /></div>
      <div className="mb-[4px] flex flex-1 items-center justify-end gap-[6px] pr-[3px]">
        <Caret c="text-[#c3c5d0]" />
        <Pin c="text-[#c3c5d0]" />
      </div>
    </div>
    <Toolbar />
    <Scene />
    <div className="absolute top-[84px] right-[5px]">
      <S s={18}>
        <path d="M1 3l13-2 2 11-8 4-6-3z" fill="#e6e6ea" />
        <rect x="3" y="3.500" width="11" height="9" rx="1" fill="#1d3f93" />
        <path d="M5 4.500h4a3.800 3.800 0 0 1 0 7H5z" fill="#7fd0d8" />
        <path d="M5.500 5H7a3.200 3.200 0 0 1 0 6H5.500z" fill="#f5e04a" />
      </S>
    </div>
  </div>
);

const Messages = () => (
  <div className="mt-[4px] flex h-[40px] w-[791px] items-start border border-[#cdd0d6] bg-[#fdfeff] pt-[5px] pl-[4px] text-[12.300px]">
    <div className="flex h-[26px] w-[53px] items-center gap-[8px] border border-[#bcc4d4] pl-[4px] text-[#2b4f8f]">消息 <Close /></div>
    <div className="ml-[7px] flex h-[26px] w-[33px] items-center justify-center bg-[#ececee]">进度</div>
    <div className="ml-[7px] flex h-[26px] w-[33px] items-center justify-center bg-[#ececee]">日志</div>
    <div className="ml-[7px] flex h-[26px] w-[51px] items-center gap-[7px] bg-[#ececee] pl-[4px]">表格 <Close /></div>
  </div>
);

/* ---------- Add physics ---------- */

const physics: React.ReactNode[] = [
  <path key="p" d="M0 1c3 3 5 4 8 4 1-3 4-4 8-3v12H9l2-2C7 12 4 10 3 8l2 0C2 6 0 4 0 1z" fill="#28b0c4" />,
  <path key="p" d="M1 5q2 3 0 6M4 4q3 4 0 8M7 3q4 5 0 10M11 2q5 6 0 12" stroke="#6d93bf" strokeWidth="1.500" />,
  <g key="p"><circle cx="5" cy="3" r="2" fill="#3f9a3c" /><circle cx="2" cy="8" r="2" fill="#2d5fa0" /><circle cx="8" cy="9" r="1.800" fill="#2d5fa0" /><circle cx="2" cy="13.500" r="2" fill="#3f9a3c" /><circle cx="8" cy="14" r="2" fill="#e8892c" /></g>,
  <path key="p" d="M.8 1v13.500H16V9H4V1z" stroke="#3c6ba6" strokeWidth="1.300" fill="#dce8f6" />,
  <path key="p" d="M0 3q6-2 16 5M0 7q6-2 16 5M0 11q6-2 14 4" stroke="#5a88bd" strokeWidth="1.400" />,
  <path key="p" d="M4.500 1q-4 5-1 8 1 3-1 6M9 1q-4 5-1 8 1 3-1 6M13.500 1q-4 5-1 8 1 3-1 6" stroke="#e8913c" strokeWidth="2" />,
  <g key="p"><path d="M1 3v10M4 3v10" stroke="#3c6ba6" strokeWidth="1.500" /><ellipse cx="9" cy="8" rx="3" ry="6.500" stroke="#3c6ba6" fill="#9cc4e8" /></g>,
  <g key="p"><circle cx="8" cy="8" r="7.500" fill="#8a3d9c" /><circle cx="8" cy="8" r="3.500" stroke="#f0c8e8" strokeWidth="1.500" strokeDasharray="2 1.500" /></g>,
  <path key="p" d="M3 7h13v7H3zM1 1v5M1 3h5M8 1v4h8M3 10.500h13" stroke="#3c6a9c" strokeWidth="1.200" />,
  <path key="p" d="M2 3h12v4H2zM0 9h14v5H0zM5 1v3M9 1v3M5 7v8M10 7v8" stroke="#5d6066" strokeWidth="1.300" fill="#c7c9cc" />,
  <path key="p" d="M4 2h12v12H4zM0 5.500h4v5H0zM4 6h12M4 10h12" stroke="#3c6ba6" strokeWidth="1.300" fill="#9cc0e4" />,
  <path key="p" d="M5 3l4 10H1z" stroke="#3c5f94" strokeWidth="1.400" />,
];

const AddPhysics = () => (
  <div className="ml-[5px] flex h-[675px] w-[34px] shrink-0 flex-col overflow-hidden border-t border-l border-[#cdd0d6] bg-[#fcfdff] whitespace-nowrap">
    <div className="flex h-[33px] shrink-0 items-center pl-[7px] text-[20px] font-light text-[#3f67a3]">添加物理场</div>
    <div className="flex h-[15px] shrink-0 items-center pl-[10px]">
      <S s={10} v="0 0 10 10"><path d="M5 0v10M0 5h10" stroke="#b3b5b8" strokeWidth="2.400" /></S>
      <span className="ml-[5px] text-[#555]">添加到组件</span>
    </div>
    <div className="mt-[15px] ml-[4px] h-[20px] w-[60px] shrink-0 border border-[#cbcdd0] bg-white" />
    <div className="mt-[6px] ml-[4px] flex h-[393px] w-[60px] shrink-0 flex-col border border-[#cbcdd0] bg-white">
      <div className="flex h-[20px] shrink-0 items-center pl-[4px]">
        <Twist open="o" />
        <span className="ml-[7px]">
          <S><circle cx="8" cy="6" r="5.500" stroke="#3c6ba6" strokeWidth="1.400" /><path d="M8 3v3.500" stroke="#3c6ba6" /><path d="M3 12h12M5 9l-4 3 4 3z" stroke="#d0502f" strokeWidth="1.600" fill="#d0502f" /></S>
        </span>
      </div>
      <div className="h-[97px] shrink-0" />
      {physics.map((p, i) => (
        <div key={i} className="flex h-[19.700px] shrink-0 items-center pl-[5px]">
          <Twist open="c" />
          <span className="ml-[7px]"><S>{p}</S></span>
        </div>
      ))}
    </div>
    <div className="mt-[7px] flex h-[16px] shrink-0 items-center pl-[5px]">
      <span className="mr-[3px] h-px w-[9px] shrink-0 bg-[#d4d6da]" />研究中的物理场接口
    </div>
    <div className="mt-[7px] ml-[4px] flex h-[29px] w-[60px] shrink-0 items-center border border-[#c4c6c9] bg-[#f1f2f4] pl-[5px]">研究</div>
    <div className="mt-[7px] flex h-[27px] shrink-0 items-center bg-[#e1e6f5] pl-[6px]">
      <S s={8} v="0 0 8 10"><path d="M1.500.8v8L6 4.800z" fill="#fff" stroke="#999" /></S>
      <span className="ml-[11px]">因变量</span>
    </div>
  </div>
);

export default function App() {
  return (
    <div className="flex h-[830px] w-[1491px] flex-col overflow-hidden bg-[#fafcfe] font-['Noto_Sans','Noto_Sans_CJK_SC',sans-serif] text-[11.600px] leading-[16px] text-black">
      <QuickAccess />
      <Tabs />
      <Ribbon />
      <div className="flex h-[703px] shrink-0 bg-[#f6f9fc] pt-[5px]">
        <ModelBuilder />
        <Settings />
        <div className="ml-[5px] flex flex-1 flex-col">
          <div className="flex">
            <Graphics />
            <AddPhysics />
          </div>
          <Messages />
        </div>
      </div>
    </div>
  );
}
